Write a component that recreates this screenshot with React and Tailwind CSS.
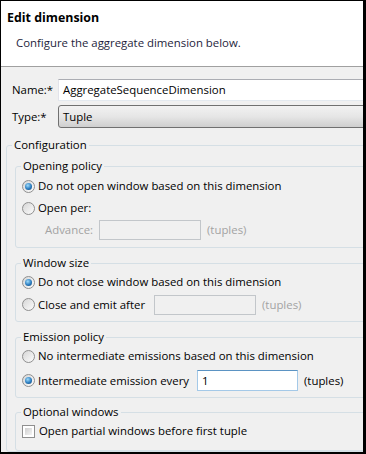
import React from 'react';

const Radio = ({ checked }) => (
  <span className="w-[13px] h-[13px] shrink-0 rounded-full border border-[#8f8f8f] bg-linear-to-br from-[#d6d6d6] to-[#fcfcfc] flex items-center justify-center">
    {checked && (
      <span className="w-[7px] h-[7px] rounded-full bg-[radial-gradient(circle_at_40%_35%,#9fdcfb,#2a7cc0_55%,#0f3d68)]" />
    )}
  </span>
);

const Group = ({ title, children, className = '', pad = '' }) => (
  <fieldset className={`border border-[#d5dfe5] rounded-[3px] ${className}`}>
    <legend className="ml-[5px] px-[2px]">{title}</legend>
    <div className={`pl-[6px] ${pad}`}>{children}</div>
  </fieldset>
);

const App = () => {
  return (
    <div
      className="w-[366px] h-[454px] overflow-hidden bg-[#f0f0f0] border-l border-t border-r-[3px] border-b-2 border-black text-[11.4px] leading-[16px] text-black"
      style={{ fontFamily: '"Open Sans", "Noto Sans", sans-serif' }}
    >
      {/* header */}
      <div className="h-[66px] bg-white border-b border-[#a0a0a0] pt-[9px]">
        <div className="pl-[6px] font-bold text-[12.4px]">Edit dimension</div>
        <div className="pl-[15px] mt-[9px] text-[#1e1e3c]">Configure the aggregate dimension below.</div>
      </div>

      <div className="w-[420px] pt-[12px]">
        <div className="flex items-center h-[22px] ml-[11px]">
          <span className="w-[46px]">Name:*</span>
          <div className="w-[340px] h-[22px] bg-white border border-[#abadb3] border-x-[#e2e3ea] border-b-[#e3e9ef] pl-[4px] flex items-center">
            AggregateSequenceDimension
          </div>
        </div>
        <div className="flex items-center h-[23px] ml-[11px] mt-[4px]">
          <span className="w-[46px]">Type:*</span>
          <div className="w-[340px] h-[23px] rounded-[3px] border border-[#707070] bg-linear-to-b from-[#f2f2f2] via-[#e6e6e6] to-[#cfcfcf] pl-[4px] flex items-center">
            Tuple
          </div>
        </div>

        {/* configuration */}
        <fieldset className="ml-[5px] mt-[9px] border border-[#d5dfe5] rounded-[3px]">
          <legend className="ml-[5px] px-[2px]">Configuration</legend>
          <div className="pl-[8px] pt-[5px]">
            <Group title="Opening policy" pad="pt-[1px] pb-[6px]">
              <div className="flex items-center gap-[3px] h-[22px]">
                <Radio checked />
                <span>Do not open window based on this dimension</span>
              </div>
              <div className="flex items-center gap-[3px] h-[22px]">
                <Radio />
                <span>Open per:</span>
              </div>
              <div className="flex items-center h-[22px] text-[#a3a3a3]">
                <span className="ml-[23px] w-[54px]">Advance:</span>
                <div className="w-[102px] h-[20px] border border-[#c2c6ca] bg-[#f0f0f0]" />
                <span className="ml-[6px]">(tuples)</span>
              </div>
            </Group>

            <Group title="Window size" className="mt-[7px]" pad="pb-[5px]">
              <div className="flex items-center gap-[3px] h-[22px]">
                <Radio checked />
                <span>Do not close window based on this dimension</span>
              </div>
              <div className="flex items-center h-[23px]">
                <div className="flex items-center gap-[3px] w-[132px]">
                  <Radio />
                  <span>Close and emit after</span>
                </div>
                <div className="w-[102px] h-[20px] border border-[#c2c6ca] bg-[#f0f0f0]" />
                <span className="ml-[6px] text-[#a3a3a3]">(tuples)</span>
              </div>
            </Group>

            <Group title="Emission policy" className="mt-[7px]" pad="pb-[3px]">
              <div className="flex items-center gap-[3px] h-[22px]">
                <Radio />
                <span>No intermediate emissions based on this dimension</span>
              </div>
              <div className="flex items-center h-[27px]">
                <div className="flex items-center gap-[3px] w-[175px]">
                  <Radio checked />
                  <span>Intermediate emission every</span>
                </div>
                <div className="w-[101px] h-[21px] bg-white border border-[#a4c9e8] border-t-[#5b93c3] pl-[4px] flex items-center">
                  1
                </div>
                <span className="ml-[6px]">(tuples)</span>
              </div>
            </Group>

            <Group title="Optional windows" className="mt-[6px]" pad="pb-[8px]">
              <div className="flex items-center gap-[4px] h-[22px]">
                <span className="w-[13px] h-[13px] border border-[#8f8f8f] bg-white p-[2px]">
                  <span className="block w-full h-full bg-linear-to-br from-[#cfcfcf] to-[#f4f4f4]" />
                </span>
                <span>Open partial windows before first tuple</span>
              </div>
            </Group>
          </div>
        </fieldset>
      </div>
    </div>
  );
};

export default App;
